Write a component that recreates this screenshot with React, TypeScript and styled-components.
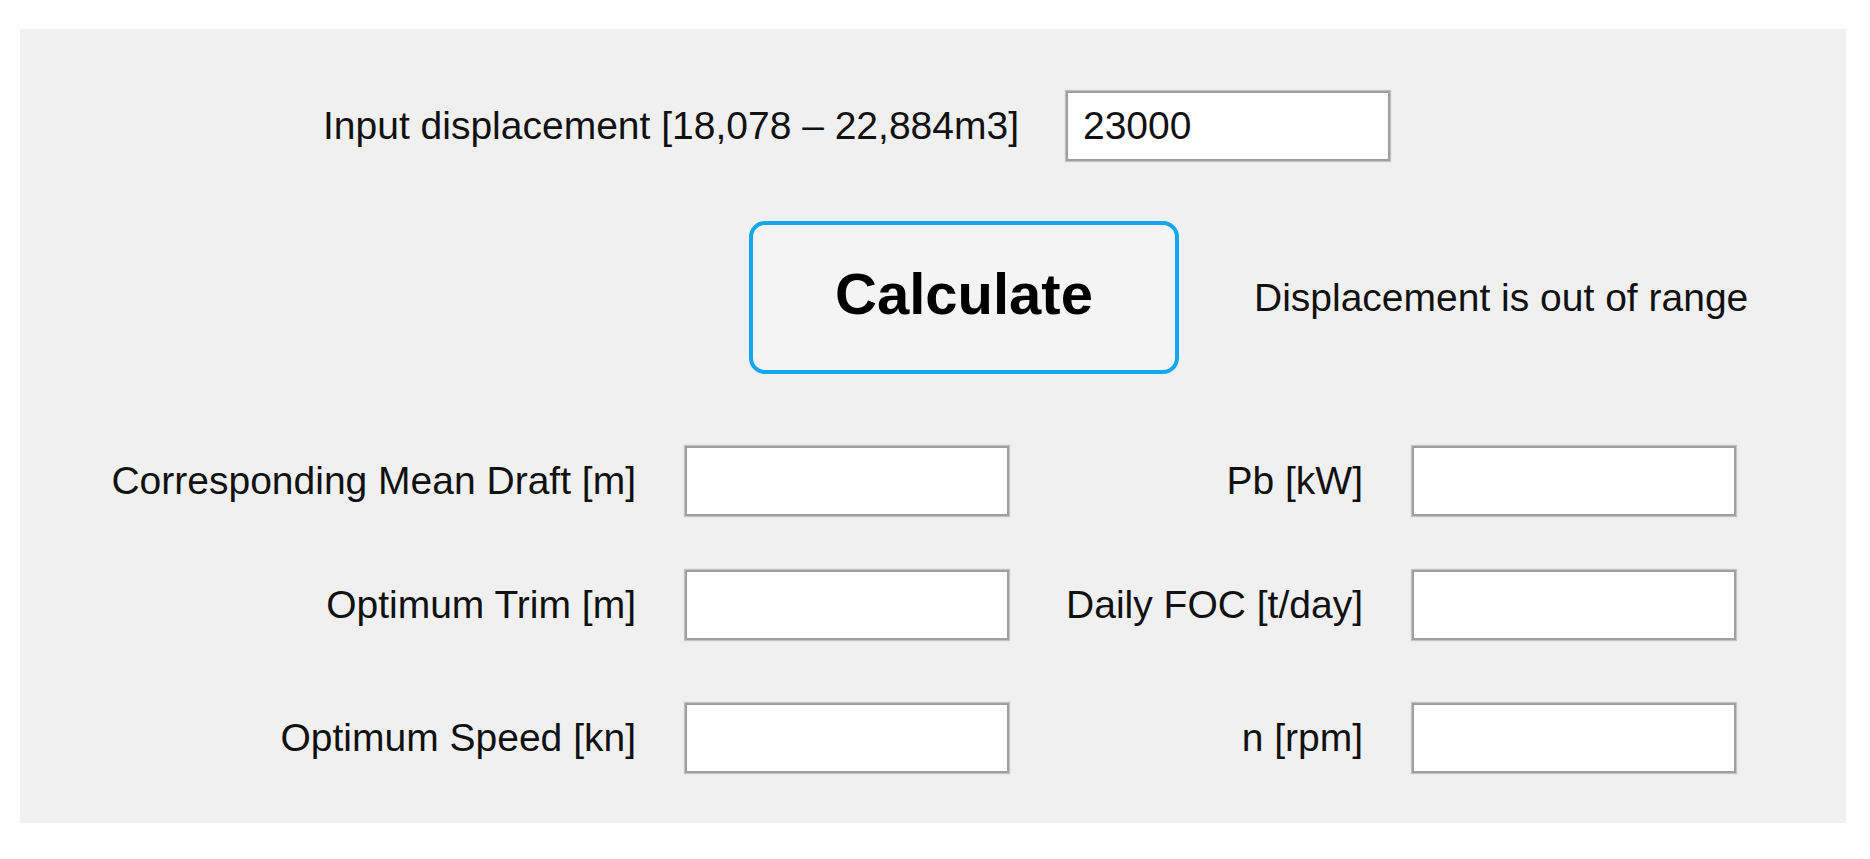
import React from "react";
import styled, { createGlobalStyle } from "styled-components";

const GlobalStyle = createGlobalStyle`
  html, body {
    margin: 0;
    padding: 0;
    background: #ffffff;
  }
  body {
    font-family: "Liberation Sans", Arial, sans-serif;
    color: #111111;
  }
  * { box-sizing: border-box; }
`;

const Page = styled.div`
  width: 1870px;
  height: 859px;
  padding: 29px 0 0 20px;
`;

const Panel = styled.div`
  width: 1826px;
  height: 794px;
  background: #f0f0f0;
  padding: 62px 0 0 40px;
  display: flex;
  flex-direction: column;
`;

const Text = styled.span`
  font-family: "Liberation Sans", Arial, sans-serif;
  font-size: 39px;
  line-height: 44px;
  color: #111111;
  white-space: nowrap;
`;

const Label = styled(Text)`
  text-align: right;
`;

const InputRow = styled.div`
  display: flex;
  align-items: center;
  padding-left: 263px;
  gap: 47px;
`;

const Field = styled.div<{ $width?: number }>`
  width: ${(p) => p.$width ?? 324}px;
  height: 70px;
  background: #ffffff;
  border: 2px solid #9f9f9f;
  box-shadow: 0 0 1px 1px rgba(160, 160, 160, 0.55);
  display: flex;
  align-items: center;
  padding-left: 15px;
  font-family: "Liberation Sans", Arial, sans-serif;
  font-size: 39px;
  color: #111111;
`;

const ActionRow = styled.div`
  display: flex;
  align-items: center;
  margin-top: 60px;
  padding-left: 689px;
  gap: 75px;
`;

const CalcButton = styled.button`
  width: 430px;
  height: 153px;
  border: 4px solid #12a6f3;
  border-radius: 16px;
  background: #f4f4f4;
  font-family: "Liberation Sans", Arial, sans-serif;
  font-weight: 700;
  font-size: 58px;
  color: #000000;
  padding: 0 0 9px 0;
  cursor: pointer;
`;

const Results = styled.div`
  display: flex;
  flex-direction: column;
  margin-top: 72px;
`;

const ResultRow = styled.div<{ $offset: number }>`
  display: grid;
  grid-template-columns: 576px 324px 305px 324px;
  column-gap: 49px;
  align-items: center;
  margin-top: ${(p) => p.$offset}px;
`;

const rows = [
  { left: "Corresponding Mean Draft [m]", right: "Pb [kW]", offset: 0 },
  { left: "Optimum Trim [m]", right: "Daily FOC [t/day]", offset: 54 },
  { left: "Optimum Speed [kn]", right: "n [rpm]", offset: 63 },
];

export default function App() {
  return (
    <>
      <GlobalStyle />
      <Page>
        <Panel>
          <InputRow>
            <Text>Input displacement [18,078 – 22,884m3]</Text>
            <Field>23000</Field>
          </InputRow>
          <ActionRow>
            <CalcButton>Calculate</CalcButton>
            <Text>Displacement is out of range</Text>
          </ActionRow>
          <Results>
            {rows.map((r) => (
              <ResultRow key={r.left} $offset={r.offset}>
                <Label>{r.left}</Label>
                <Field />
                <Label>{r.right}</Label>
                <Field />
              </ResultRow>
            ))}
          </Results>
        </Panel>
      </Page>
    </>
  );
}
